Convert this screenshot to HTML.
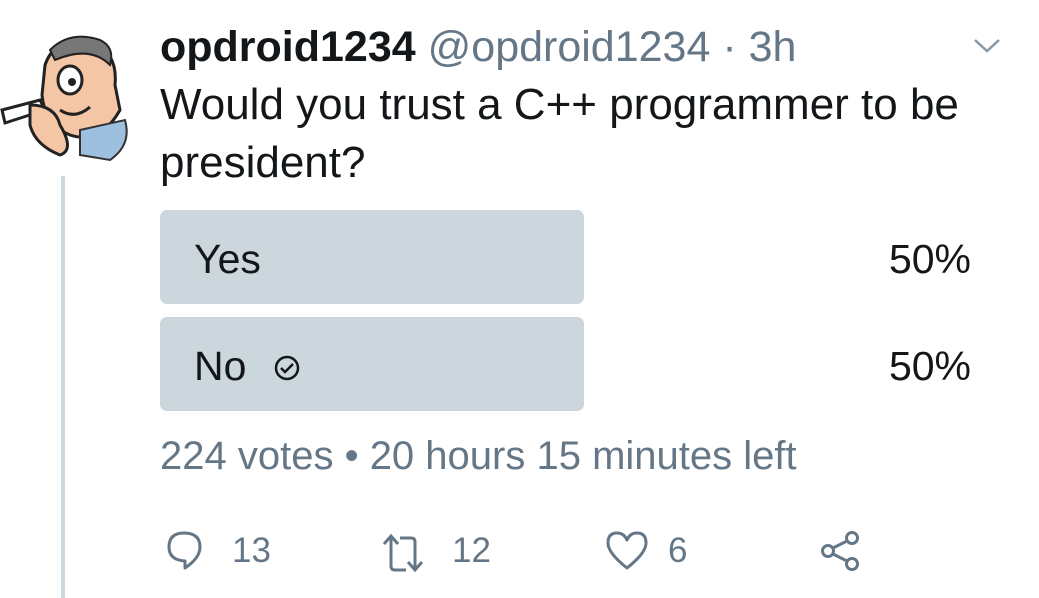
<!DOCTYPE html>
<html><head><style>
body{margin:0;width:1039px;height:598px;background:#fff;font-family:"Liberation Sans",Arial,sans-serif;position:relative;overflow:hidden}
.a{position:absolute;white-space:nowrap}
.bar{position:absolute;left:160px;width:424px;height:94px;background:#ccd6dd;border-radius:7px}
.g{color:#657786}
</style></head><body>
<svg class="a" style="left:0;top:25px" width="140" height="145" viewBox="0 0 140 145">
<path d="M45 40 Q55 10 95 18 Q118 30 115 60 L120 85 Q100 120 70 110 Q45 100 42 70Z" fill="#f4c6a5" stroke="#222" stroke-width="3"/>
<path d="M50 25 Q70 5 100 15 Q115 22 110 40 Q90 20 55 35Z" fill="#777" stroke="#222" stroke-width="2"/>
<ellipse cx="70" cy="55" rx="12" ry="14" fill="#fff" stroke="#222" stroke-width="3"/>
<circle cx="72" cy="57" r="4" fill="#222"/>
<path d="M60 85 Q75 95 90 82" fill="none" stroke="#222" stroke-width="3"/>
<path d="M80 105 L125 95 Q132 120 110 135 L80 130Z" fill="#9ec0e0" stroke="#333" stroke-width="2"/>
<path d="M2 85 L40 75 L45 85 L5 98Z" fill="#fff" stroke="#222" stroke-width="3"/>
<path d="M30 80 Q55 80 60 100 Q75 125 60 130 Q35 120 30 100Z" fill="#f4c6a5" stroke="#222" stroke-width="3"/>
</svg>
<div class="a" style="left:61px;top:176px;width:4px;height:422px;background:#ccd6dd"></div>
<div class="a" style="left:160px;top:21px;font-size:43px;line-height:52px"><b style="color:#14171a">opdroid1234</b> <span class="g">@opdroid1234 · 3h</span></div>
<svg class="a" style="left:972px;top:36px" width="30" height="20"><path d="M3 4 L15 15 L27 4" fill="none" stroke="#8899a6" stroke-width="2.5"/></svg>
<div class="a" style="left:160px;top:76px;font-size:44px;line-height:58px;color:#14171a;white-space:normal;width:860px">Would you trust a C++ programmer to be president?</div>
<div class="bar" style="top:210px"></div>
<div class="bar" style="top:317px"></div>
<div class="a" style="left:194px;top:236px;font-size:41px;color:#14171a">Yes</div>
<div class="a" style="left:194px;top:343px;font-size:41px;color:#14171a">No</div>
<svg class="a" style="left:272px;top:353px" width="30" height="30"><circle cx="15" cy="15" r="11" fill="none" stroke="#14171a" stroke-width="2.5"/><path d="M9 15 L13 19 L21 11" fill="none" stroke="#14171a" stroke-width="2.5"/></svg>
<div class="a" style="right:68px;top:236px;font-size:41px;color:#14171a">50%</div>
<div class="a" style="right:68px;top:343px;font-size:41px;color:#14171a">50%</div>
<div class="a g" style="left:160px;top:434px;font-size:40px">224 votes • 20 hours 15 minutes left</div>
<svg class="a" style="left:164px;top:528px" width="46" height="46" viewBox="0 0 46 46"><path d="M21 40 L21 33 Q5 32 5 19 Q5 5 20 5 Q36 5 36 19 Q36 30 21 40Z" fill="none" stroke="#657786" stroke-width="3" stroke-linejoin="round"/></svg>
<div class="a g" style="left:232px;top:531px;font-size:35px">13</div>
<svg class="a" style="left:380px;top:528px" width="50" height="46" viewBox="0 0 50 46"><path d="M4 16 L11 8 L18 16 M11 8 L11 38 Q11 42 15 42 L26 42" fill="none" stroke="#657786" stroke-width="3"/><path d="M20 10 L31 10 Q35 10 35 14 L35 42 M28 34 L35 42 L42 34" fill="none" stroke="#657786" stroke-width="3"/></svg>
<div class="a g" style="left:452px;top:531px;font-size:35px">12</div>
<svg class="a" style="left:602px;top:528px" width="50" height="46" viewBox="0 0 50 46"><path d="M25 40 Q6 25 6 15 Q6 5 15 5 Q22 5 25 12 Q28 5 35 5 Q44 5 44 15 Q44 25 25 40Z" fill="none" stroke="#657786" stroke-width="3" stroke-linejoin="round"/></svg>
<div class="a g" style="left:668px;top:531px;font-size:35px">6</div>
<svg class="a" style="left:818px;top:528px" width="46" height="46" viewBox="0 0 46 46"><circle cx="10" cy="23" r="5.5" fill="none" stroke="#657786" stroke-width="3"/><circle cx="34" cy="10" r="5.5" fill="none" stroke="#657786" stroke-width="3"/><circle cx="34" cy="36" r="5.5" fill="none" stroke="#657786" stroke-width="3"/><path d="M15 20 L29 13 M15 26 L29 33" stroke="#657786" stroke-width="3"/></svg>
</body></html>
